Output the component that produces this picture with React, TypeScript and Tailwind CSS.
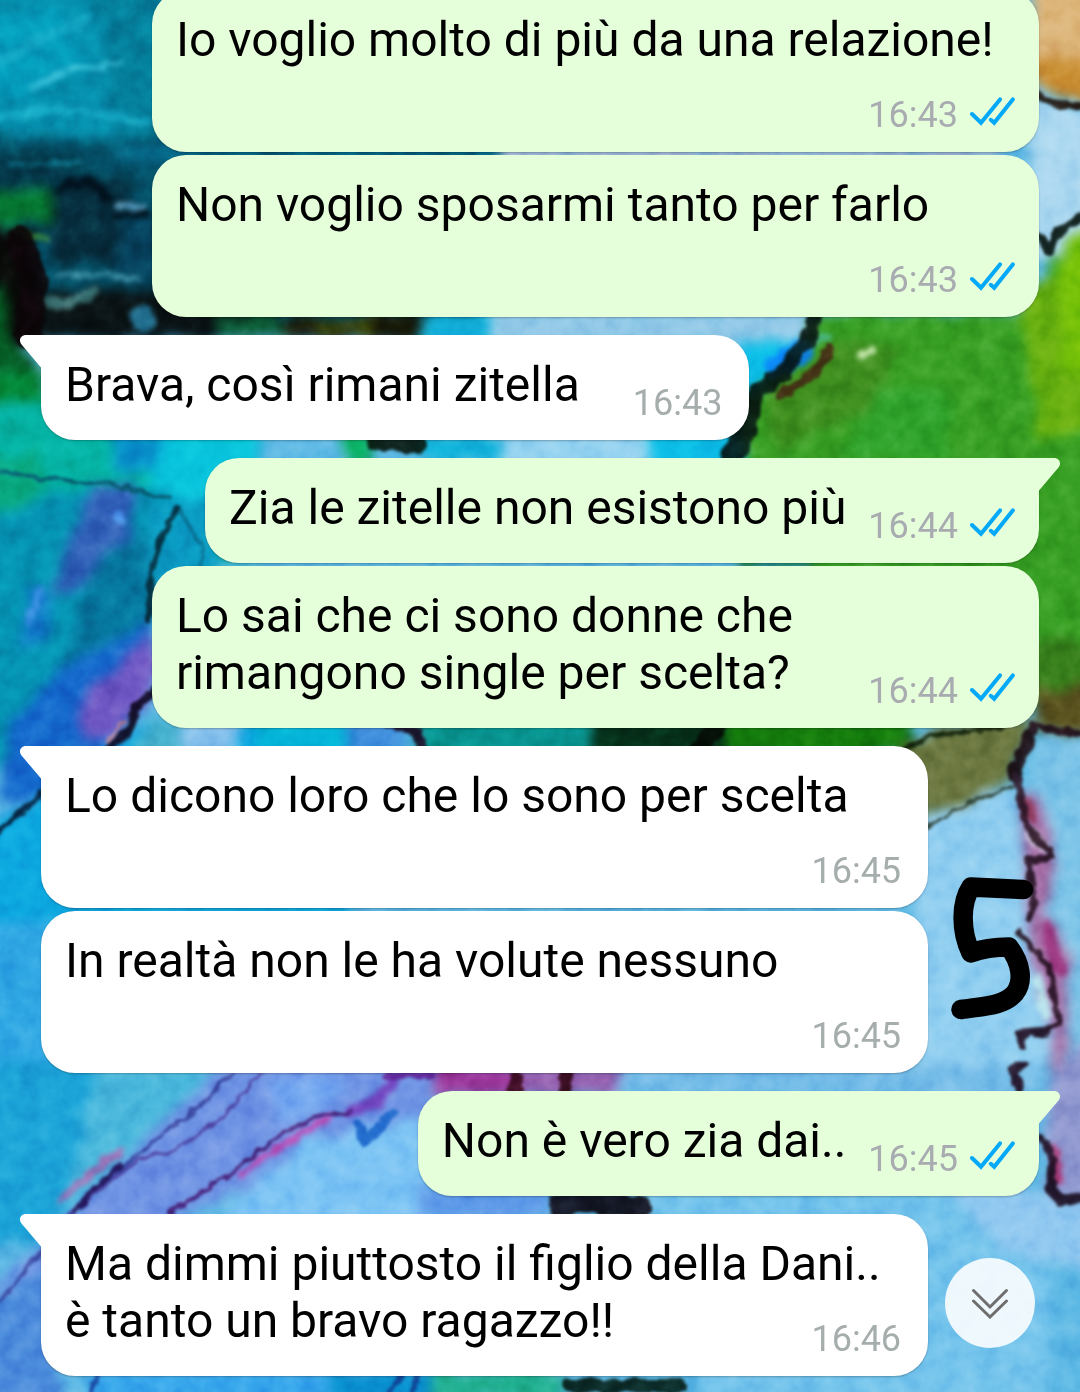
import { Fragment } from "react";
import clsx from "clsx";

type Message = {
  text: string;
  time: string;
  mine: boolean;
  tail?: boolean;
};

type Stroke = {
  d: string;
  color: string;
  width: number;
};

const messages: Message[] = [
  { text: "Io voglio molto di più da una relazione!", time: "16:43", mine: true },
  { text: "Non voglio sposarmi tanto per farlo", time: "16:43", mine: true },
  { text: "Brava, così rimani zitella", time: "16:43", mine: false, tail: true },
  { text: "Zia le zitelle non esistono più", time: "16:44", mine: true, tail: true },
  { text: "Lo sai che ci sono donne che rimangono single per scelta?", time: "16:44", mine: true },
  { text: "Lo dicono loro che lo sono per scelta", time: "16:45", mine: false, tail: true },
  { text: "In realtà non le ha volute nessuno", time: "16:45", mine: false },
  { text: "Non è vero zia dai..", time: "16:45", mine: true, tail: true },
  { text: "Ma dimmi piuttosto il figlio della Dani..\nè tanto un bravo ragazzo!!", time: "16:46", mine: false, tail: true },
];

// large colour fields of the ink wallpaper, painted back to front
const washes: [string, string][] = [
  ["M-40 -40H1120V1440H-40Z", "#5cb8e4"],
  ["M-40 -40H500V150H-40Z", "#058fae"],
  ["M-40 20L60 10L90 60L20 100H-40Z", "#049cbc"],
  ["M90 -40H420V150H120Z", "#047f9c"],
  ["M-40 128L60 140L160 135H480V340H-40Z", "#045068"],
  ["M-40 160L60 150L110 190L60 230H-40Z", "#043648"],
  ["M50 185L130 180V265H50Z", "#062c3c"],
  ["M120 215H200V280H120Z", "#06405c"],
  ["M-40 186H54V224H-40Z", "#067a35"],
  ["M-40 228H36L40 345H-40Z", "#080a08"],
  ["M40 290H280V337H40Z", "#0a1214"],
  ["M-40 320L0 280L14 340L50 375V420H-40Z", "#055c24"],
  ["M-40 370L50 375V400L-40 410Z", "#048838"],
  ["M-40 415L60 395H260V560H-40Z", "#05b3a4"],
  ["M110 430H170V475L110 470Z", "#0892cc"],
  ["M165 430H260V475L180 520L150 480Z", "#08c4dc"],
  ["M-40 460L40 450V510L-40 560Z", "#08a880"],
  ["M-40 530L60 490L170 490L150 640L-40 800Z", "#0594b4"],
  ["M100 485L140 485L130 530L90 580L50 600L60 560Z", "#3060b8"],
  ["M20 650L30 590L50 590L50 630Z", "#1078c8"],
  ["M95 560L150 530L150 630L60 670Z", "#0678a0"],
  ["M150 500H220V580H150Z", "#0a9cc4"],
  ["M0 810L10 720L60 670L150 620V700L110 745L40 795Z", "#1468cc"],
  ["M75 705L155 630V690L110 740L85 735Z", "#7058c4"],
  ["M-40 850L150 720H350V920H-40Z", "#0ca8e0"],
  ["M-40 920H60V1080H-40Z", "#30a8e4"],
  ["M150 720H190V760H130Z", "#48b4d0"],
  ["M185 715H235V760H185Z", "#84c0ec"],
  ["M255 715H345V760H255Z", "#04b4d8"],
  ["M345 715H400V760H345Z", "#3c8cdc"],
  ["M418 715H600V760H418Z", "#089490"],
  ["M590 715H725V760H590Z", "#06301a"],
  ["M120 145H500V160H120Z", "#05688a"],
  ["M500 140H1000V160H500Z", "#a4b8d8"],
  ["M215 317H290V340H215Z", "#0c6038"],
  ["M285 315H424V340H285Z", "#181a08"],
  ["M320 320H370V335H320Z", "#404c08"],
  ["M422 312H500V345H422Z", "#12b0da"],
  ["M415 435H500V460H415Z", "#10b4dc"],
  ["M492 312H815V345H492Z", "#94cae8"],
  ["M500 430H650V470H500Z", "#94d2f0"],
  ["M345 430H372V465H345Z", "#08b060"],
  ["M740 340H812V370L760 400L735 470H650V430H740Z", "#0cc0e8"],
  ["M1030 -40H1120V95L1035 80Z", "#dcb478"],
  ["M1030 60H1120V108L1050 95Z", "#c88c30"],
  ["M1030 96L1120 120V215L1050 262H1030Z", "#acd8f0"],
  ["M810 312H1040L1050 262L1120 212V740L1040 700L740 750V400L805 350Z", "#38a024"],
  ["M1020 300L1120 220V420L1040 440Z", "#68b010"],
  ["M1060 240L1120 220V380L1060 370Z", "#74c008"],
  ["M760 400L830 340L900 345L880 400L780 455Z", "#409020"],
  ["M840 450L880 390H950V460H840Z", "#30a42c"],
  ["M1030 640H1120V690L1030 700Z", "#38801c"],
  ["M740 560H810V570H740Z", "#1878c0"],
  ["M725 715H910V755H725Z", "#147c0c"],
  ["M900 745L930 728L1035 715L1010 780L925 825Z", "#6c7840"],
  ["M1035 690L1120 675V735H1035Z", "#5c5420"],
  ["M915 825L1010 785L1025 860L1045 940L1060 1040L1020 1110H915Z", "#90cef0"],
  ["M1035 740L1120 735V1210H1065L1060 1080L1040 860Z", "#7cc4e8"],
  ["M1020 790L1040 800L1055 860L1048 915L1070 960L1060 1130L1050 1030L1030 940Z", "#a870a8"],
  ["M1045 1080L1120 1010V1200H1050Z", "#9098d0"],
  ["M-40 1060H200L60 1240L-40 1250Z", "#1ca4d8"],
  ["M100 1060H240L60 1220Z", "#4ab8dc"],
  ["M230 1060H430V1120L60 1260L0 1392H-40V1320Z", "#7094e4"],
  ["M225 1215L300 1140L430 1115V1240H190Z", "#7cc4f4"],
  ["M270 1080L350 1075L330 1110L280 1125Z", "#74a8f0"],
  ["M430 1065H530V1095H430Z", "#9c389c"],
  ["M520 1065H620V1095H520Z", "#9460b0"],
  ["M-40 1310L60 1260V1440H-40Z", "#4c8cdc"],
  ["M90 1370H380V1410H90Z", "#38a8ec"],
  ["M420 1185H550V1220H420Z", "#5c98e8"],
  ["M330 1372H430V1400H330Z", "#0890d0"],
  ["M430 1372H560V1400H430Z", "#20b090"],
  ["M620 1065H1040V1095H620Z", "#74bce8"],
  ["M640 1190H1050V1440H700V1220H640Z", "#74c4ec"],
  ["M940 1180L1060 1195L1120 1210V1280L1000 1250Z", "#90c8f0"],
];

// dark veins and fine ink lines
const veins: Stroke[] = [
  { d: "M20 240L34 280L28 335", color: "#0c0508", width: 28 },
  { d: "M815 318L806 342L780 375L756 392L742 450", color: "#061310", width: 16 },
  { d: "M830 348L815 372L780 395", color: "#442814", width: 10 },
  { d: "M374 441L418 444", color: "#08140a", width: 18 },
  { d: "M732 455L750 410", color: "#061210", width: 22 },
  { d: "M0 472L60 480L110 484L170 498", color: "#085870", width: 4 },
  { d: "M178 508L160 540L151 570L149 620", color: "#062838", width: 6 },
  { d: "M180 512L204 548L200 568", color: "#0a6c8c", width: 3 },
  { d: "M156 690L136 708L128 732L104 752", color: "#100820", width: 8 },
  { d: "M108 742L124 722", color: "#b08098", width: 4 },
  { d: "M42 794L20 812L-6 836", color: "#06203c", width: 6 },
  { d: "M390 724L416 732L424 750", color: "#180820", width: 10 },
  { d: "M692 757L716 728", color: "#040804", width: 18 },
  { d: "M1030 92L1052 103L1085 107", color: "#1c1008", width: 8 },
  { d: "M1038 234L1050 250L1060 232L1085 214", color: "#061610", width: 9 },
  { d: "M905 748L930 736L1000 727", color: "#102008", width: 5 },
  { d: "M925 828L968 803L1012 787", color: "#28382c", width: 3 },
  { d: "M1085 734L1062 732L1034 724L1032 740L1014 770", color: "#200c18", width: 7 },
  { d: "M1028 738L1014 774", color: "#180810", width: 13 },
  { d: "M1016 776L1022 806L1030 832L1050 850", color: "#2c1424", width: 8 },
  { d: "M1050 856L1028 862L1034 896L1030 918", color: "#241020", width: 7 },
  { d: "M1018 932L1034 950L1050 968L1054 1000L1060 1022L1042 1034", color: "#241020", width: 6 },
  { d: "M1048 1032L1020 1034L1022 1046M1024 1066L1012 1070L1020 1090", color: "#200c20", width: 9 },
  { d: "M1042 1138L1054 1160L1050 1188L1062 1202L1085 1198", color: "#180a1c", width: 9 },
  { d: "M234 1072L200 1106L140 1152L80 1206L0 1302", color: "#34409c", width: 4 },
  { d: "M262 1072L226 1114L176 1150L138 1160L70 1214", color: "#5040a0", width: 3 },
  { d: "M120 1164L74 1210", color: "#200c54", width: 6 },
  { d: "M170 1213L232 1172L286 1132L312 1118L350 1112", color: "#481c78", width: 4 },
  { d: "M358 1124L364 1142L394 1112", color: "#1c68cc", width: 10 },
  { d: "M386 1076L430 1074", color: "#602098", width: 8 },
  { d: "M516 1078V1090M566 1072V1094", color: "#380818", width: 14 },
  { d: "M560 1205L584 1200L640 1208", color: "#0c0610", width: 24 },
  { d: "M390 1392L400 1376M412 1392L418 1376", color: "#103c90", width: 6 },
  { d: "M92 1392L98 1374", color: "#1c4ca8", width: 5 },
  { d: "M570 1386H680", color: "#041c14", width: 14 },
];

// soft glints and secondary tints, kept half transparent
const glints: Stroke[] = [
  { d: "M30 88L70 70L120 64", color: "#3cc4dc", width: 5 },
  { d: "M0 118L60 108L150 122", color: "#18b0cc", width: 8 },
  { d: "M0 62L40 40L90 18", color: "#18b0cc", width: 10 },
  { d: "M10 166L80 162", color: "#1090a8", width: 4 },
  { d: "M60 188L90 180L108 200", color: "#020c18", width: 10 },
  { d: "M118 204L142 208", color: "#70b0d0", width: 7 },
  { d: "M112 218L146 214", color: "#04101c", width: 6 },
  { d: "M58 276L96 274L140 280", color: "#48a0b4", width: 5 },
  { d: "M44 300L66 304L96 292", color: "#488888", width: 9 },
  { d: "M140 314L146 324", color: "#2888b0", width: 20 },
  { d: "M22 232L46 240", color: "#48a040", width: 8 },
  { d: "M776 366L802 352", color: "#0878ff", width: 24 },
  { d: "M862 355L872 350", color: "#e8ffd0", width: 9 },
  { d: "M816 344L828 336", color: "#50c0a0", width: 8 },
  { d: "M120 516L124 520", color: "#60b0ff", width: 8 },
  { d: "M28 620L40 590", color: "#4090e8", width: 9 },
  { d: "M240 1174L286 1142L330 1118", color: "#d040b0", width: 6 },
  { d: "M60 1200L120 1150", color: "#b060b0", width: 8 },
  { d: "M350 1112L378 1100L392 1082", color: "#7434b8", width: 12 },
  { d: "M1054 1148L1058 1178", color: "#b02868", width: 10 },
  { d: "M1030 834L1044 848", color: "#e8f4ff", width: 9 },
  { d: "M1038 980L1046 1014", color: "#c4f4f4", width: 10 },
  { d: "M1048 930L1058 970", color: "#a03080", width: 14 },
  { d: "M1024 800L1032 820", color: "#903050", width: 10 },
];

function InkStrokes({ strokes }: { strokes: Stroke[] }) {
  return (
    <>
      {strokes.map((s) => (
        <path key={s.d} d={s.d} stroke={s.color} strokeWidth={s.width} />
      ))}
    </>
  );
}

function Wallpaper() {
  return (
    <svg
      className="absolute inset-0 h-full w-full"
      viewBox="0 0 1080 1392"
      preserveAspectRatio="xMidYMid slice"
      aria-hidden="true"
    >
      <defs>
        <filter id="wash" x="-5%" y="-5%" width="110%" height="110%" colorInterpolationFilters="sRGB">
          <feTurbulence type="fractalNoise" baseFrequency="0.04" numOctaves="3" seed="4" />
          <feDisplacementMap in="SourceGraphic" scale="20" xChannelSelector="R" yChannelSelector="G" />
          <feGaussianBlur stdDeviation="6" />
        </filter>
        <filter id="vein" x="-5%" y="-5%" width="110%" height="110%" colorInterpolationFilters="sRGB">
          <feTurbulence type="fractalNoise" baseFrequency="0.08" numOctaves="2" seed="9" />
          <feDisplacementMap in="SourceGraphic" scale="9" xChannelSelector="R" yChannelSelector="G" />
          <feGaussianBlur stdDeviation="1.7" />
        </filter>
        <filter id="glint" x="-5%" y="-5%" width="110%" height="110%" colorInterpolationFilters="sRGB">
          <feTurbulence type="fractalNoise" baseFrequency="0.08" numOctaves="2" seed="6" />
          <feDisplacementMap in="SourceGraphic" scale="12" xChannelSelector="R" yChannelSelector="G" />
          <feGaussianBlur stdDeviation="2.5" />
        </filter>
        <filter id="grain" x="0" y="0" width="100%" height="100%" colorInterpolationFilters="sRGB">
          <feTurbulence type="fractalNoise" baseFrequency="0.05" numOctaves="3" seed="2" />
          <feColorMatrix values="1.4 0 0 0 -0.2  1.4 0 0 0 -0.2  1.4 0 0 0 -0.2  0 0 0 0 1" />
        </filter>
      </defs>
      <g filter="url(#wash)">
        {washes.map(([d, fill]) => (
          <path key={d} d={d} fill={fill} />
        ))}
      </g>
      <g filter="url(#glint)" fill="none" strokeLinecap="round" strokeLinejoin="round" className="opacity-80">
        <InkStrokes strokes={glints} />
      </g>
      <g filter="url(#vein)" fill="none" strokeLinecap="round" strokeLinejoin="round" className="opacity-90">
        <InkStrokes strokes={veins} />
      </g>
      <rect width="1080" height="1392" filter="url(#grain)" className="opacity-30 mix-blend-soft-light" />
    </svg>
  );
}

function ReadTicks() {
  return (
    <svg
      width="45"
      height="29"
      viewBox="0 0 45 29"
      fill="none"
      stroke="#03a9f9"
      strokeWidth="4"
      strokeLinecap="round"
      role="img"
      aria-label="Letto"
    >
      <path d="M2 17L11 25.800L30 2.400" />
      <path d="M20.800 22.800L24.200 25.800L42.800 2.400" />
    </svg>
  );
}

function Tail({ mine }: { mine: boolean }) {
  return (
    <svg
      className={clsx("absolute top-0", mine ? "left-full -ml-px fill-[#e6ffdb]" : "right-full -mr-px -scale-x-100 fill-white")}
      width="22"
      height="34"
      viewBox="0 0 22 34"
      aria-hidden="true"
    >
      <path d="M0 0H16C21 0 24 5 20.500 9.500L1 32.500V34H0Z" />
    </svg>
  );
}

function Bubble({ message }: { message: Message }) {
  const { text, time, mine, tail } = message;
  const lines = text.split("\n");
  return (
    <li
      className={clsx(
        "relative flow-root max-w-8/9 rounded-[34px] pt-[21px] pb-4 pl-6 shadow-[0_1px_2px_rgba(0,0,0,0.25)]",
        mine ? "self-end bg-[#e6ffdb] pr-6" : "self-start bg-white pr-[27px]",
        lines.length > 1 && "w-8/9",
        tail && "mt-[15px]",
        tail && (mine ? "rounded-tr-none" : "rounded-tl-none")
      )}
    >
      {tail && <Tail mine={mine} />}
      <span className="text-[48px] leading-[57px] text-black">
        {lines.map((line, i) => (
          <Fragment key={line}>
            {i > 0 && <br />}
            <span>{line}</span>
          </Fragment>
        ))}
      </span>
      <span
        className={clsx(
          "float-right flex h-[68px] items-end gap-3 text-[36px] leading-[42px]",
          mine ? "ml-[22px] text-[#a8abb0]" : "ml-[53px] text-[#a6adad]"
        )}
      >
        <time>{time}</time>
        {mine && (
          <span className="pb-[10px]">
            <ReadTicks />
          </span>
        )}
      </span>
    </li>
  );
}

function HandwrittenFive() {
  return (
    <svg
      className="absolute top-[874px] right-[44px]"
      width="88"
      height="150"
      viewBox="948 874 88 150"
      fill="none"
      stroke="black"
      strokeWidth="19.500"
      strokeLinecap="round"
      strokeLinejoin="round"
      role="img"
      aria-label="5"
    >
      <path d="M1023.500 889.500L971 887C961 902 960 930 971 953C984 948 995 947 1009 947C1021 963 1024 981 1015 993C1004 1006 984 1006 961 1009.500" />
    </svg>
  );
}

function ScrollDownButton() {
  return (
    <button
      type="button"
      aria-label="Vai in fondo"
      className="absolute right-[45px] bottom-11 flex size-[90px] items-center justify-center rounded-full bg-white/88"
    >
      <svg width="38" height="32" viewBox="0 0 38 32" fill="none" stroke="#6e6e6e" strokeWidth="3" strokeLinecap="round" aria-hidden="true">
        <path d="M2.500 3.500L19 20L35.500 3.500" />
        <path d="M2.500 14L19 30L35.500 14" />
      </svg>
    </button>
  );
}

export default function App() {
  return (
    <main className="relative min-h-screen overflow-hidden bg-[#5cb8e4] font-[Roboto,sans-serif]">
      <Wallpaper />
      <ul className="relative -mt-[10px] flex flex-col gap-[3px] px-[41px] pb-4">
        {messages.map((message) => (
          <Bubble key={message.text} message={message} />
        ))}
      </ul>
      <HandwrittenFive />
      <ScrollDownButton />
    </main>
  );
}
